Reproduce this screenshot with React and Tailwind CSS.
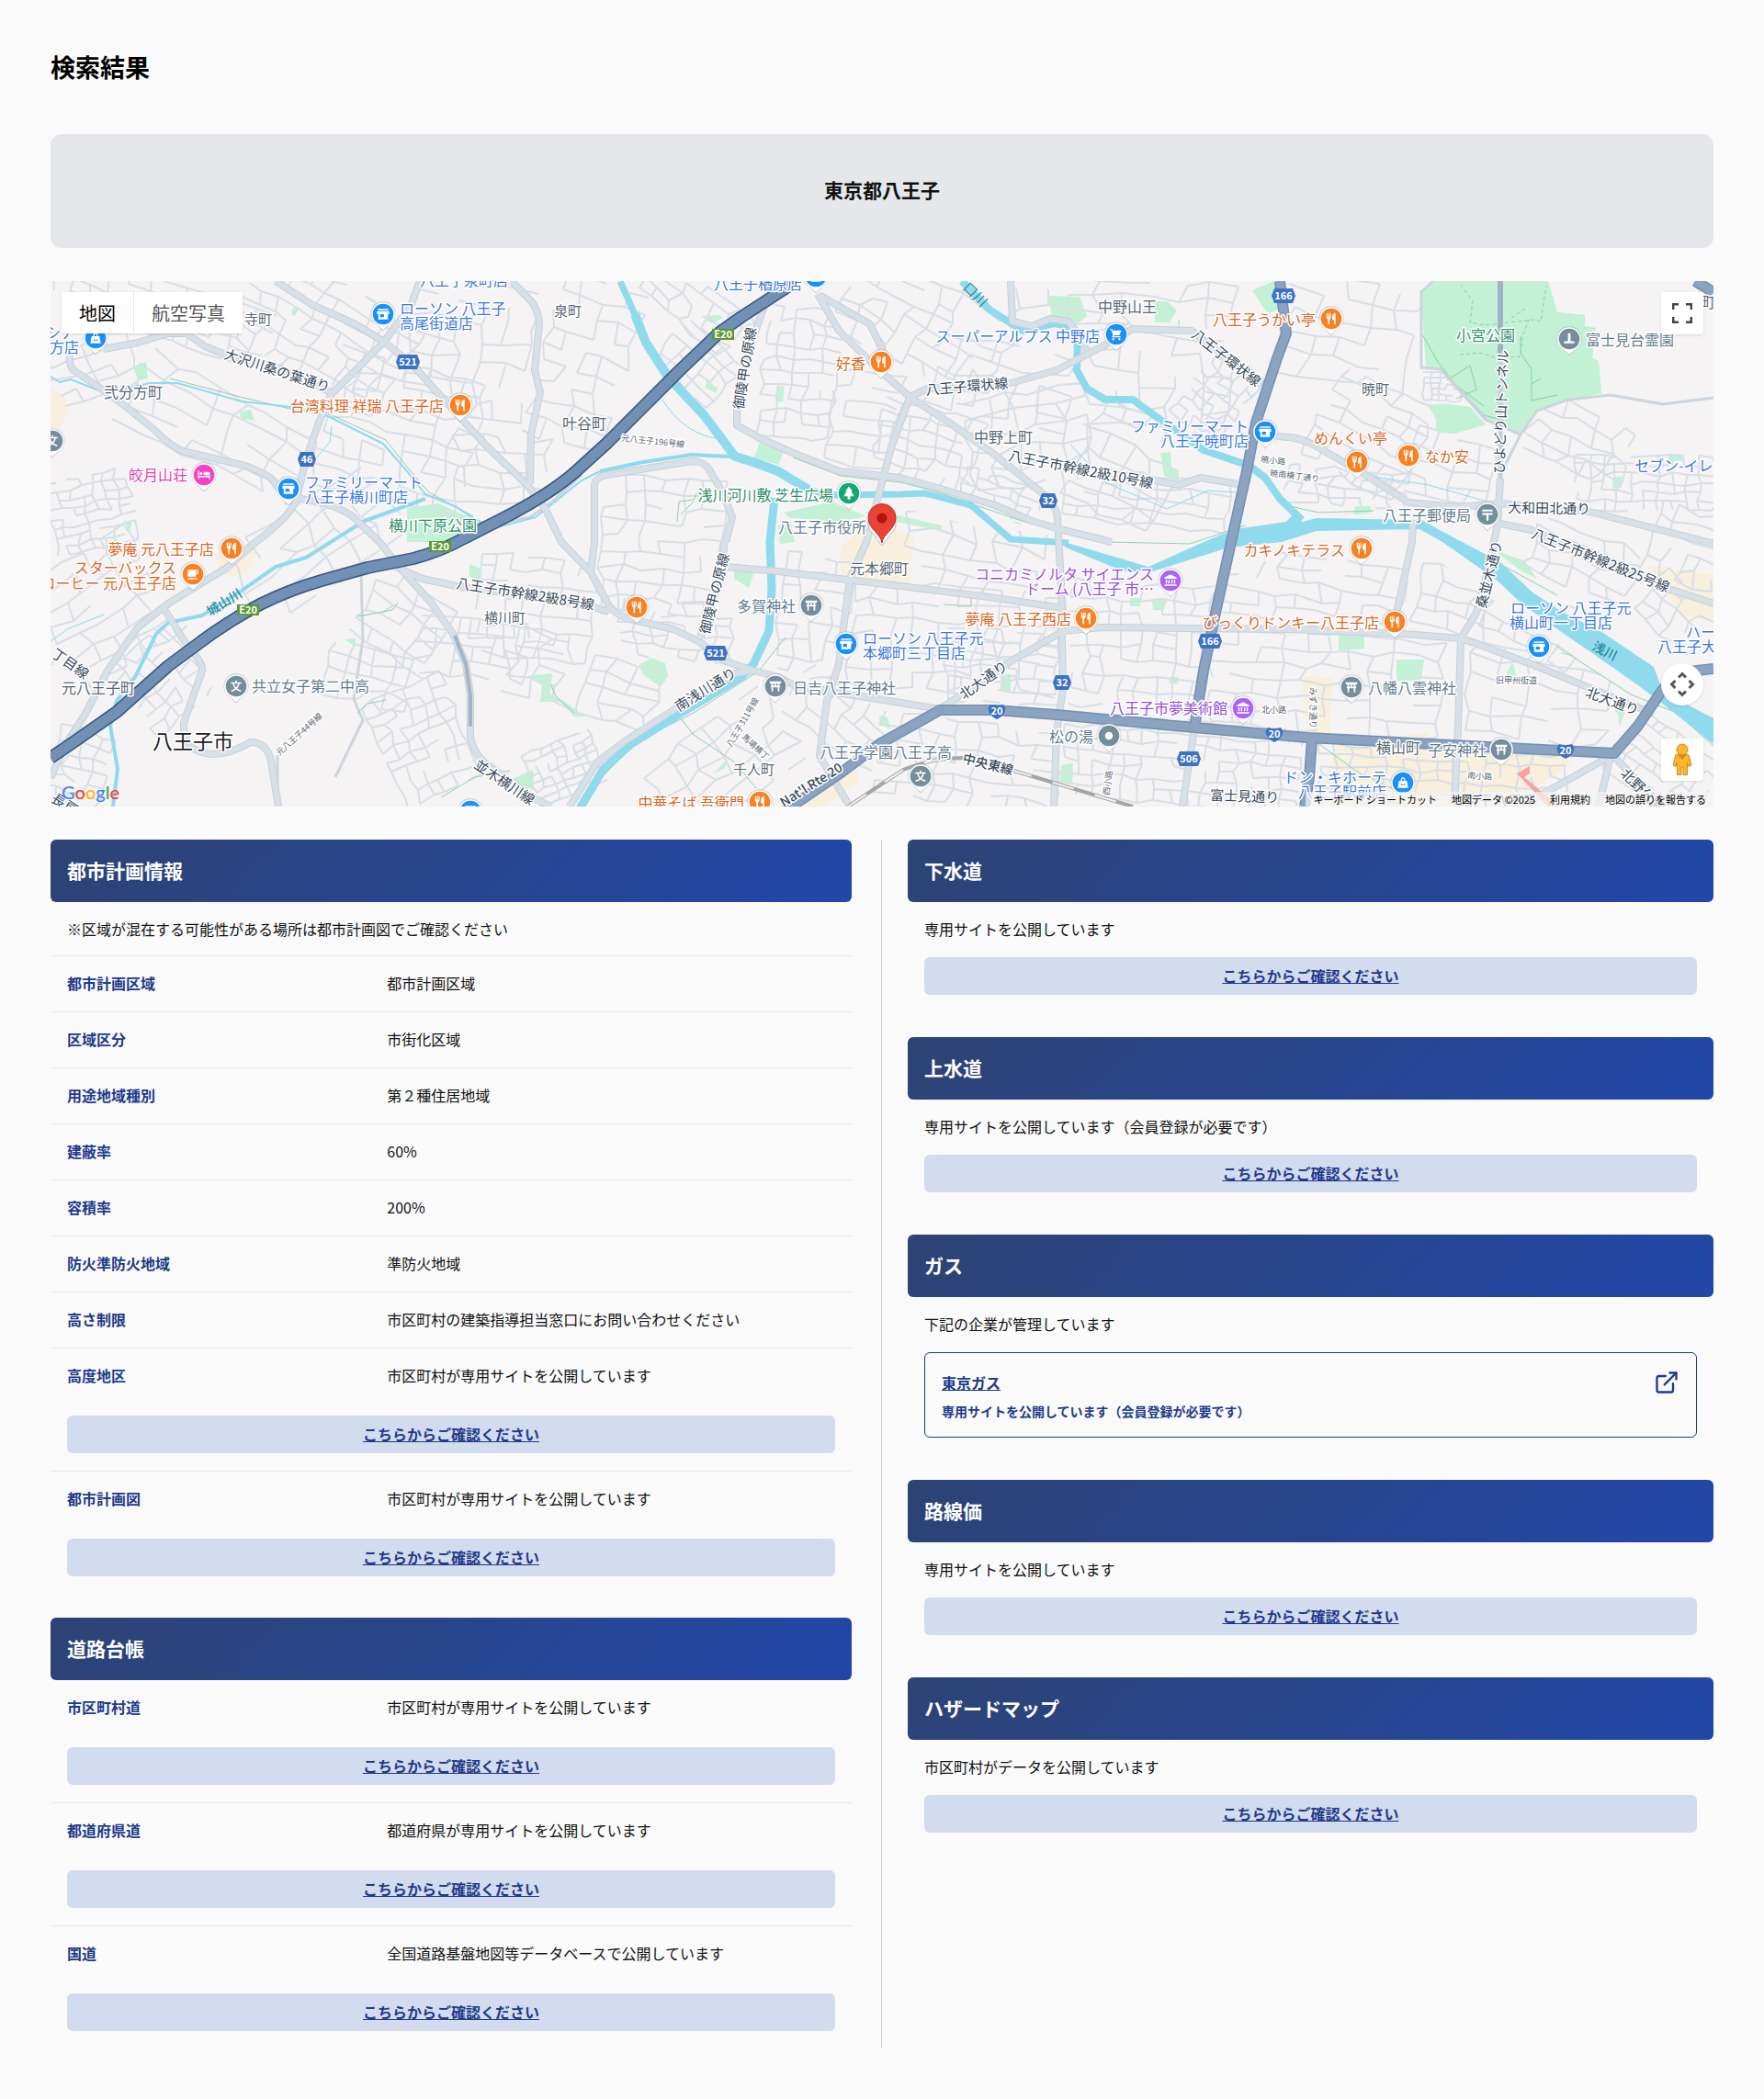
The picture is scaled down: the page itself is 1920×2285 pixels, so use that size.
import React from 'react';
import { ExternalLink } from 'lucide-react';

const LINK_TEXT = 'こちらからご確認ください';

const cityPlan = [
  { label: '都市計画区域', value: '都市計画区域' },
  { label: '区域区分', value: '市街化区域' },
  { label: '用途地域種別', value: '第２種住居地域' },
  { label: '建蔽率', value: '60%' },
  { label: '容積率', value: '200%' },
  { label: '防火準防火地域', value: '準防火地域' },
  { label: '高さ制限', value: '市区町村の建築指導担当窓口にお問い合わせください' },
  { label: '高度地区', value: '市区町村が専用サイトを公開しています', link: true },
  { label: '都市計画図', value: '市区町村が専用サイトを公開しています', link: true },
];

const roadLedger = [
  { label: '市区町村道', value: '市区町村が専用サイトを公開しています', link: true },
  { label: '都道府県道', value: '都道府県が専用サイトを公開しています', link: true },
  { label: '国道', value: '全国道路基盤地図等データベースで公開しています', link: true },
];

/* ---------- map data ---------- */

const motorway =
  'M0 519 L22 504 L72 469 L128 419 L155 399 Q190 372 228 352 Q260 336 295 326 L345 312 L395 302 Q425 294 450 280 L495 257 Q545 231 572 207 L605 177 L645 137 L685 97 L728 56 L752 39 L795 11 L812 0';

const trunkRoads = [
  'M1338 0 L1345 57 L1335 84 L1312 154 L1302 207 L1285 284 L1268 361 L1255 424 L1245 486',
  'M780 590 L862 534 L902 504 L968 467 L1028 467 L1095 472 L1245 486 L1368 497 L1545 506 L1702 514 L1728 484 L1753 447 Q1770 425 1792 424 L1810 422',
  'M1373 499 L1370 540 L1365 572',
  'M1790 0 L1810 12',
];

const mainRoads = [
  'M245 0 L285 26 L332 47 L363 66 L395 92 L428 129 L475 180 L518 221 L538 247 L556 284 L588 317 L608 354 Q618 366 635 369 L678 379 L705 392 L735 414 L765 424 L792 431 L812 441 L925 459 L968 466',
  'M402 0 L392 27 L363 66 L328 101 L305 124 L292 154 L278 194 L268 237 Q262 256 222 285 L192 312 L128 351 L95 377 L62 424 L38 471 L15 507 L0 541',
  'M20 71 Q20 95 25 97 L55 117 L75 131 L112 161 Q135 184 148 186 L212 201 Q240 212 242 217 L255 234 L295 241 Q325 250 335 262 L358 284 L382 314 L415 351 L438 384 L452 417 L457 451 L457 497 Q460 512 472 524 L528 564 L545 572',
  'M382 314 L405 324 L442 332 L500 340 L588 354 L608 360',
  'M58 74 L95 67 L128 57 L148 57 L168 71 L188 79 L250 95 L305 121',
  'M502 0 L525 24 Q532 36 532 47 L527 97 L533 121 L523 167 L522 221',
  'M835 14 L858 54 L902 97 L935 126 L978 154 L1025 187 L1075 227 Q1096 245 1096 258 L1100 330 L1102 444 L1095 491 L1092 572',
  'M838 16 L892 47 L905 74 L905 97',
  'M778 24 L765 61 L747 127 L747 157 L772 171 L808 187 L858 207 L925 214 L962 224 L1028 244 L1068 261 L1102 271 L1155 284',
  'M733 284 L732 314 L708 387',
  'M588 317 L592 284 L592 221 Q594 213 605 211 L698 196 Q712 196 718 207 L732 231 L742 257 L735 284',
  'M935 126 L955 117 L1045 111 L1095 97 L1145 71 L1178 52 L1242 54 L1318 112',
  'M1045 0 L1047 44 L1068 49 L1088 41 L1108 44 L1120 60 L1128 76',
  'M935 127 L915 181 L888 284 L870 324 L858 417 L845 457 L837 517 L870 572',
  'M735 311 L792 316 L925 332 L1022 344 L1102 356',
  'M1102 381 L1145 377 L1345 379 L1472 384 L1535 389 L1558 397 L1612 417 L1678 444 L1745 471',
  'M1102 381 L1045 414 L968 466',
  'M1535 389 L1532 484 L1528 572',
  'M1535 389 L1552 361 L1566 310 L1575 264 L1578 215',
  'M1483 261 L1482 284 L1465 361 L1465 384',
  'M1202 217 L1228 222 L1252 214 L1292 221',
  'M1320 167 L1355 171 Q1372 175 1390 187 L1425 207 L1478 241 L1532 246 L1578 242 L1675 251 L1810 286',
  'M1578 264 L1612 271 L1680 300 L1758 334 L1810 351',
  'M122 354 L145 391 Q168 418 165 424 L145 481 Q144 505 160 511 Q182 522 218 502 Q235 502 240 522 L248 572',
  'M565 572 L595 524 L625 501 L678 467 L745 427 L765 424',
  'M1698 517 L1632 554 L1600 572',
  'M1700 516 L1755 572',
  'M1245 486 L1232 572',
  'M1698 517 L1685 572',
];

const lesserRoads = [
  'M1600 167 L1618 141 L1652 129 L1698 124 L1755 134 L1810 127',
  'M445 265 L495 262 L522 257 L545 241 L578 211',
  'M1505 0 L1492 12 L1492 94 L1513 96 L1562 151 L1600 167 L1578 211',
  'M310 540 L340 478 L330 455 L340 390 L338 320',
  'M247 516 L247 572',
];

const rivers = [
  { w: 7, d: 'M620 0 L638 41' },
  { w: 10, d: 'M636 36 L648 67 L672 104 L712 147 L745 191 L765 197 L792 207 L825 227' },
  { w: 7, d: 'M820 226 L850 233 L925 232 L952 231 L1002 244 L1045 281 L1108 285' },
  { w: 9, d: 'M788 236 L783 284 L785 334 L782 381 L765 417 L752 431 L685 471 L632 504 L602 531 L576 574' },
  { w: 8, d: 'M992 0 L1022 31 L1058 54 L1092 46 L1108 49 Q1118 55 1118 64 L1117 97 L1128 117 L1148 129 L1178 129 L1208 151 L1255 184 L1305 201 L1322 214 L1338 237 L1362 260' },
  { w: 4, d: 'M742 191 L698 189 L645 197 L598 207' },
  { w: 2, d: 'M598 207 L578 217 L528 257 L482 269 L458 257 L442 246 L408 232 L388 207 L362 177 L302 147 L262 137 L208 131 L138 111 L108 111 L60 122 L22 107 L10 110 L0 104' },
  { w: 4, d: 'M408 237 L342 261 L305 284 L278 301 L245 311 L208 337 L165 364 L128 372 L115 384 L92 431 L72 457 L65 484 L73 531 L68 572' },
  { w: 1, d: 'M0 392 L20 378 L58 363 M306 158 L304 175 L290 192 M665 128 Q690 168 730 172 M1110 178 L1150 220 L1215 248 L1260 228 L1290 230 M1440 213 L1500 222 L1578 244 M0 418 L8 408' },
];

const riverArea =
  'M1100 283 L1168 303 L1195 311 L1262 281 L1290 270 L1345 262 L1356 250 L1345 243 L1362 262 L1378 258 L1492 260 L1525 278 L1578 306 L1612 338 L1645 360 L1690 383 L1745 420 L1755 447 L1810 476 L1810 504 L1752 458 L1728 440 L1678 405 L1630 372 L1600 350 L1575 326 L1515 284 L1490 270 L1378 272 L1340 284 L1282 290 L1200 316 L1168 316 L1105 290 Z';

const parks = [
  'M1492 11 L1505 0 L1630 0 L1640 34 L1670 37 L1670 49 L1682 51 L1678 84 L1685 87 L1688 122 L1652 129 L1618 141 L1600 167 L1562 151 L1528 114 L1513 96 L1497 94 Z',
  'M1499 134 L1520 134 L1545 137 L1562 156 L1528 166 L1508 164 L1508 150 Z',
  'M388 247 L422 242 L455 257 L462 274 L440 284 L388 284 Z',
  'M90 93 L104 88 L106 106 L95 108 Z',
  'M205 142 L218 140 L222 152 L208 150 Z',
  'M264 28 L270 30 L266 38 L262 36 Z',
  'M708 38 L728 37 L732 40 L720 46 Z',
  'M772 176 L798 186 L792 200 L766 192 Z',
  'M714 108 L726 116 L724 122 L713 116 Z',
  'M792 114 L799 115 L797 132 L790 131 Z',
  'M1086 16 L1120 17 L1128 38 L1118 46 L1090 38 Z',
  'M1202 22 L1215 22 L1226 32 L1218 45 L1202 45 Z',
  'M1308 10 L1332 0 L1338 30 L1325 36 Z',
  'M1208 187 L1219 186 L1220 202 L1228 206 L1228 218 L1212 212 Z',
  'M798 252 L850 240 L888 256 L860 262 L805 258 Z M792 266 L806 264 L810 284 L794 286 Z M918 254 L970 266 L970 272 L920 262 Z',
  'M640 418 L655 410 L669 416 L672 430 L664 442 L645 428 Z',
  'M518 430 L546 427 L544 450 L560 458 L582 474 L570 474 L555 458 L533 458 L535 440 Z',
  'M744 315 L766 317 L760 334 L744 324 Z',
  'M456 308 L470 314 L468 325 L456 322 Z',
  'M320 390 L332 389 L332 398 Z',
  'M1575 294 L1605 305 L1618 324 L1580 306 Z',
  'M1402 385 L1430 384 L1430 400 L1402 402 Z',
  'M1465 412 L1495 412 L1492 434 L1465 436 Z',
  'M1034 430 L1045 430 L1045 446 L1034 446 Z',
  'M1100 527 L1113 525 L1112 548 L1098 546 Z',
  'M1175 345 L1186 345 L1186 354 L1175 354 Z M1199 346 L1215 347 L1212 358 L1200 358 Z M1218 431 L1227 431 L1227 438 L1218 438 Z',
  'M902 473 L911 475 L914 488 L903 482 Z',
  'M1585 427 L1591 414 L1596 430 Z M1702 466 L1715 464 L1708 485 L1706 472 Z',
  'M1420 245 L1437 245 L1437 255 L1418 254 Z M1761 190 L1776 190 L1776 196 L1761 196 Z M1700 214 L1710 212 L1710 225 L1700 225 Z',
  'M500 543 L525 532 L526 554 L512 550 Z M722 536 L738 518 L734 530 Z M80 260 L88 263 L86 276 Z',
];

const commercial = [
  'M178 298 L222 284 L226 290 L214 318 L196 322 L184 312 Z',
  'M860 290 L895 258 L940 278 L935 330 L900 335 L860 322 Z',
  'M1362 430 L1395 432 L1392 500 L1368 500 Z',
  'M1400 500 L1500 508 L1660 512 L1650 530 L1600 560 L1540 572 L1380 572 Z',
  'M1740 310 L1810 320 L1810 370 L1775 364 Z',
  'M800 572 L850 540 L875 526 L880 545 L840 572 Z',
  'M0 118 L14 124 L20 138 L10 160 L0 160 Z',
  'M1475 494 L1500 492 L1500 508 L1475 506 Z',
];

const footpaths =
  'M450 278 L480 258 M302 144 L365 173 L391 206 L412 230 L460 256 M130 106 L210 127 L265 140 M682 262 L684 240 L700 238 L704 230 M700 240 L686 254 M808 192 L860 212 L925 219 L960 228 L1060 262 L1150 284 L1240 286 L1300 266 M1345 244 L1380 252 L1440 250 M1345 292 L1380 292 M1545 290 L1640 342 M1545 300 L1580 330 M1640 398 L1720 450 L1770 470 L1810 506 M800 388 L770 425 L700 470 L640 500 L600 540 L582 572 M686 476 L700 494 L745 524 L768 552 M1378 502 L1425 536 L1460 552 M335 365 L372 358 L378 350 M334 470 L345 460 L365 456 M425 562 L462 540 L500 533 M972 352 L1002 354 L1002 344 M570 470 L550 452 L545 440';

const parkPaths =
  'M1535 4 L1548 22 L1545 45 L1560 48 L1615 42 L1622 44 L1628 5 M1534 80 L1555 78 L1575 84 L1600 82 L1602 60 L1610 40 M1590 40 L1605 30';

const parkTrails =
  'M1493 58 L1510 88 L1530 114 L1560 146 L1582 152 M1520 108 L1545 92 L1552 118 L1530 128 M1600 60 L1600 78 L1612 96 L1612 130 L1640 124 M1612 112 L1622 106 M1525 110 L1560 136';

// [x, y, width, height, angle, step]
const streetAreas = [
  [0, 0, 240, 60, 18, 22],
  [0, 66, 90, 60, -18, 26],
  [80, 120, 200, 80, 28, 36],
  [200, 0, 190, 110, 30, 22],
  [300, 90, 160, 150, 14, 26],
  [390, 0, 130, 150, 8, 34],
  [535, 0, 90, 180, 16, 28],
  [440, 170, 100, 70, 4, 30],
  [0, 212, 90, 80, -12, 15],
  [200, 240, 180, 90, -34, 34],
  [0, 290, 120, 130, -32, 28],
  [78, 390, 80, 90, -42, 19],
  [0, 490, 60, 80, 16, 22],
  [300, 400, 90, 60, 14, 26],
  [340, 330, 90, 80, 32, 28],
  [360, 440, 90, 120, -24, 19],
  [400, 370, 120, 60, 6, 24],
  [460, 300, 130, 110, 6, 22],
  [600, 214, 130, 150, 4, 25],
  [640, 0, 120, 50, 40, 24],
  [665, 60, 80, 60, 42, 18],
  [775, 30, 80, 140, 6, 19],
  [850, 100, 70, 100, 8, 24],
  [860, 0, 180, 100, 30, 26],
  [960, 70, 150, 80, 12, 34],
  [900, 140, 110, 80, 14, 20],
  [1000, 120, 130, 100, -10, 34],
  [1120, 140, 100, 120, 24, 30],
  [1050, 0, 240, 50, 4, 36],
  [1130, 60, 150, 100, 4, 34],
  [1240, 80, 60, 90, 38, 17],
  [1100, 210, 180, 55, 6, 24],
  [990, 215, 90, 40, 20, 15],
  [1345, 0, 140, 110, 12, 32],
  [1380, 110, 110, 110, 28, 25],
  [1495, 100, 40, 30, 2, 9],
  [1480, 170, 90, 70, 14, 26],
  [1345, 205, 130, 40, 5, 20],
  [1610, 140, 110, 70, 26, 30],
  [1660, 190, 150, 60, 1, 16],
  [1740, 250, 80, 80, 18, 24],
  [1610, 275, 120, 60, 22, 30],
  [500, 400, 160, 70, 18, 34],
  [520, 500, 80, 60, -22, 13],
  [620, 350, 120, 60, 4, 20],
  [660, 480, 150, 90, -38, 32],
  [795, 300, 70, 130, 8, 28],
  [870, 335, 230, 110, 4, 27],
  [800, 445, 120, 60, 36, 24],
  [925, 262, 150, 80, 12, 30],
  [975, 380, 120, 80, 2, 22],
  [1110, 330, 150, 135, 3, 23],
  [1270, 300, 200, 75, 8, 25],
  [1262, 385, 250, 105, 4, 27],
  [900, 480, 190, 90, 8, 23],
  [1100, 480, 260, 90, 5, 18],
  [1380, 510, 270, 60, 3, 20],
  [1490, 300, 80, 80, 16, 23],
  [1545, 400, 150, 100, 8, 34],
  [1560, 340, 110, 60, 28, 28],
  [1700, 490, 110, 80, 38, 19],
  [1730, 330, 80, 60, 40, 25],
];

// small deterministic generator so the streets are the same on every render
const makeRandom = (seed) => {
  let s = seed * 7919 + 13;
  return () => {
    s = (s * 1103515245 + 12345) % 2147483648;
    return s / 2147483648;
  };
};

const streetPath = ([x, y, w, h, angle, step], seed) => {
  const rand = makeRandom(seed + 1);
  const cx = x + w / 2;
  const cy = y + h / 2;
  const rad = (angle * Math.PI) / 180;
  const cols = Math.round(w / step) + 1;
  const rows = Math.round(h / (step * 0.8)) + 1;
  const nodes = [];
  for (let r = 0; r <= rows; r++) {
    const row = [];
    for (let c = 0; c <= cols; c++) {
      const dx = (c / cols - 0.5) * w + (rand() - 0.5) * step * 0.4;
      const dy = (r / rows - 0.5) * h + (rand() - 0.5) * step * 0.3;
      row.push([
        Math.round(cx + dx * Math.cos(rad) - dy * Math.sin(rad)),
        Math.round(cy + dx * Math.sin(rad) + dy * Math.cos(rad)),
      ]);
    }
    nodes.push(row);
  }
  let d = '';
  for (let r = 0; r <= rows; r++) {
    for (let c = 0; c <= cols; c++) {
      const [px, py] = nodes[r][c];
      if (c < cols && rand() < 0.78) d += `M${px} ${py}L${nodes[r][c + 1][0]} ${nodes[r][c + 1][1]}`;
      if (r < rows && rand() < 0.66) d += `M${px} ${py}L${nodes[r + 1][c][0]} ${nodes[r + 1][c][1]}`;
    }
  }
  return d;
};

const streets = streetAreas.map(streetPath).join('');

const COLORS = {
  food: '#d9661f',
  shop: '#3b78e0',
  park: '#2f8f6b',
  civic: '#647d8c',
  museum: '#9250d8',
  hotel: '#e23bb4',
  water: '#1f8a9c',
  road: '#37475a',
  town: '#596673',
  city: '#1c2024',
};

// [text, x, baseline, colour, anchor, size, angle]
const labels = [
  ['八王子泉町店', 402, 5, 'shop'],
  ['ローソン 八王子', 380, 36, 'shop'],
  ['高尾街道店', 380, 52, 'shop'],
  ['シア', 27, 62, 'shop', 'end'],
  ['方店', 31, 78, 'shop', 'end'],
  ['寺町', 211, 47, 'town', 'start', 15],
  ['弐分方町', 58, 127, 'town'],
  ['台湾料理 祥瑞 八王子店', 428, 142, 'food', 'end'],
  ['皎月山荘', 149, 217, 'hotel', 'end'],
  ['ファミリーマート', 277, 225, 'shop'],
  ['八王子横川町店', 277, 241, 'shop'],
  ['横川下原公園', 368, 272, 'park'],
  ['夢庵 元八王子店', 178, 298, 'food', 'end'],
  ['スターバックス', 137, 318, 'food', 'end'],
  ['コーヒー 元八王子店', 137, 335, 'food', 'end'],
  ['元八王子町', 12, 449, 'town'],
  ['共立女子第二中高', 219, 447, 'civic'],
  ['八王子市', 111, 509, 'city', 'start', 22],
  ['泉町', 548, 38, 'town', 'start', 15],
  ['叶谷町', 557, 161, 'town'],
  ['八王子楢原店', 722, 9, 'shop'],
  ['好香', 887, 96, 'food', 'end'],
  ['浅川河川敷 芝生広場', 852, 239, 'park', 'end'],
  ['八王子市役所', 888, 274, 'civic', 'end'],
  ['スーパーアルプス 中野店', 1142, 66, 'shop', 'end'],
  ['中野山王', 1140, 34, 'town'],
  ['八王子うかい亭', 1377, 48, 'food', 'end'],
  ['中野上町', 1005, 176, 'town'],
  ['ファミリーマート', 1304, 164, 'shop', 'end'],
  ['八王子暁町店', 1304, 180, 'shop', 'end'],
  ['小宮公園', 1530, 65, 'park'],
  ['富士見台霊園', 1671, 70, 'civic'],
  ['町', 1796, 29, 'town'],
  ['暁町', 1427, 123, 'town', 'start', 15],
  ['めんくい亭', 1375, 177, 'food'],
  ['なか安', 1496, 197, 'food'],
  ['セブン-イレ', 1724, 207, 'shop'],
  ['八王子郵便局', 1546, 261, 'civic', 'end'],
  ['横川町', 472, 372, 'town', 'start', 15],
  ['多賀神社', 811, 360, 'civic', 'end'],
  ['ローソン 八王子元', 884, 395, 'shop'],
  ['本郷町三丁目店', 884, 411, 'shop'],
  ['日吉八王子神社', 808, 449, 'civic'],
  ['千人町', 743, 537, 'town', 'start', 15],
  ['八王子学園八王子高', 837, 519, 'civic'],
  ['中華そば 吾衛門', 755, 574, 'food', 'end'],
  ['元本郷町', 870, 319, 'town'],
  ['コニカミノルタ サイエンス', 1201, 325, 'museum', 'end'],
  ['ドーム (八王子 市⋯', 1201, 341, 'museum', 'end'],
  ['夢庵 八王子西店', 1111, 374, 'food', 'end'],
  ['八王子市夢美術館', 1281, 471, 'museum', 'end'],
  ['松の湯', 1135, 502, 'civic', 'end'],
  ['ドン・キホーテ', 1454, 546, 'shop', 'end'],
  ['八王子駅前店', 1454, 562, 'shop', 'end'],
  ['びっくりドンキー八王子店', 1446, 378, 'food', 'end'],
  ['カキノキテラス', 1409, 299, 'food', 'end'],
  ['ローソン 八王子元', 1589, 362, 'shop'],
  ['横山町一丁目店', 1588, 378, 'shop'],
  ['ハー', 1780, 388, 'shop'],
  ['八王子大', 1749, 404, 'shop'],
  ['八幡八雲神社', 1434, 449, 'civic'],
  ['横山町', 1443, 514, 'town'],
  ['子安神社', 1563, 517, 'civic', 'end'],
  ['大沢川桑の葉通り', 188, 84, 'road', 'start', 15, 18],
  ['城山川', 174, 365, 'water', 'start', 14, -32],
  ['丁目線', 0, 408, 'road', 'start', 15, 35],
  ['長房', 0, 566, 'road', 'start', 15, 32],
  ['元八王子44号線', 249, 517, 'town', 'start', 9, -42],
  ['並木横川線', 460, 529, 'road', 'start', 15, 34],
  ['元八王子196号線', 621, 174, 'town', 'start', 9, 6],
  ['御陵甲の原線', 754, 140, 'road', 'start', 15, -81],
  ['御陵甲の原線', 717, 385, 'road', 'start', 15, -76],
  ['口川', 992, 8, 'water', 'start', 15, 44],
  ['八王子環状線', 953, 124, 'road', 'start', 15, -5],
  ['八王子環状線', 1241, 60, 'road', 'start', 15, 38],
  ['八王子市幹線2級10号線', 1042, 195, 'road', 'start', 15, 11],
  ['暁小路', 1317, 197, 'town', 'start', 9, 6],
  ['暁南横丁通り', 1327, 212, 'town', 'start', 9, 7],
  ['ひよどり山トンネル', 1582, 210, 'road', 'start', 15, -88],
  ['大和田北通り', 1586, 252, 'road', 'start', 15, 1],
  ['八王子市幹線2級25号線', 1611, 279, 'road', 'start', 15, 22],
  ['八王子市幹線2級8号線', 441, 334, 'road', 'start', 15, 9],
  ['南浅川通り', 684, 469, 'road', 'start', 15, -32],
  ['八王子311号線', 741, 508, 'town', 'start', 9, -60],
  ['馬場横丁', 752, 497, 'town', 'start', 9, 43],
  ["Nat'l Rte 20", 798, 573, 'road', 'start', 14, -32],
  ['北大通り', 994, 456, 'road', 'start', 15, -35],
  ['北小路', 1318, 470, 'town', 'start', 9],
  ['中央東線', 992, 524, 'road', 'start', 14, 14],
  ['西小路', 1152, 560, 'town', 'start', 9, -82],
  ['富士見通り', 1262, 565, 'road', 'start', 15, 2],
  ['桑並木通り', 1562, 357, 'road', 'start', 15, -76],
  ['浅川', 1677, 401, 'water', 'start', 14, 26],
  ['旧甲州街道', 1573, 438, 'town', 'start', 9],
  ['北大通り', 1670, 452, 'road', 'start', 15, 20],
  ['みずき通り', 1371, 442, 'town', 'start', 9, 90],
  ['南小路', 1542, 541, 'town', 'start', 9, 4],
  ['北野公園', 1708, 537, 'road', 'start', 15, 45],
  ['京王八王子', 1538, 572, 'civic'],
];

// [kind, x, y]
const pins = [
  ['shop', 362, 36], ['bag', 49, 62], ['food', 446, 135], ['school', 2, 174],
  ['hotel', 167, 211], ['shop', 259, 226], ['food', 197, 291], ['cafe', 155, 319],
  ['school', 202, 441], ['shop', 457, 577], ['shop', 833, -5], ['food', 904, 88],
  ['tree', 869, 231], ['cart', 1160, 58], ['shop', 1322, 164], ['food', 1394, 41],
  ['grave', 1653, 63], ['food', 1422, 197], ['food', 1478, 190], ['post', 1564, 254],
  ['food', 638, 355], ['shrine', 828, 353], ['shop', 866, 395], ['shrine', 789, 441],
  ['food', 772, 567], ['museum', 1219, 326], ['food', 1127, 367], ['dot', 1152, 495],
  ['school', 947, 539], ['museum', 1298, 465], ['food', 1427, 291], ['food', 1463, 371],
  ['shop', 1620, 398], ['shrine', 1416, 442], ['shrine', 1579, 510], ['bag', 1472, 546],
];

const pinColors = {
  shop: '#1a90fc', bag: '#1a90fc', cart: '#1a90fc', food: '#fb8022', cafe: '#fb8022',
  hotel: '#f541c6', tree: '#17a673', museum: '#ac62f7', school: '#748e9b',
  grave: '#748e9b', post: '#748e9b', shrine: '#748e9b', dot: '#748e9b',
};

const glyphs = {
  shop: <path d="M-6 -6H6V-4.500H-6ZM-7 -3.500H7V0H5.500V6H-5.500V0H-7ZM-3.500 0V3.500H1V0Z" fillRule="evenodd" />,
  bag: <path d="M-4.500 -2H-2.500V-3A2.500 3 0 0 1 2.500 -3V-2H4.500L6 6H-6ZM-1.300 -2H1.300V-3A1.300 1.800 0 0 0 -1.300 -3ZM-2.500 1A2.500 2.500 0 0 0 2.500 1H1.500A1.500 1.500 0 0 1 -1.500 1Z" fillRule="evenodd" />,
  cart: <path d="M-7 -6H-4.500L-4 -4.500H6L3.500 1H-2.500L-3 2.200H5V3.500H-5L-3.800 0.500L-5.500 -4.700H-7ZM-3.500 4.300A1.200 1.200 0 1 1 -3.500 6.800A1.200 1.200 0 1 1 -3.500 4.300ZM3.500 4.300A1.200 1.200 0 1 1 3.500 6.800A1.200 1.200 0 1 1 3.500 4.300Z" />,
  food: <path d="M-5.500 -6.500H-4.300V-2.500H-3.500V-6.500H-2.300V-2.500H-1.500V-6.500H-0.300V-2Q-0.500 0 -2 0.500V6.500H-3.800V0.500Q-5.300 0 -5.500 -2ZM1.200 -2Q1.500 -6 5 -6.500V6.500H3.300V1.500H1.200Z" />,
  cafe: <path d="M-6 -5H6V0H3.500V1.500Q3.300 3 2 3H-4.500Q-6 3 -6 1.500ZM3.500 -3.700V-1.300H4.700V-3.700ZM-6 4.500H5V6H-6Z" fillRule="evenodd" />,
  hotel: <path d="M-7 -5H-5.700V1H7V5H5.700V2.500H-5.700V5H-7ZM-3.300 -3.300A1.600 1.600 0 1 1 -3.300 -0.100A1.600 1.600 0 1 1 -3.300 -3.300ZM-0.500 -3.500H5.500Q7 -3.300 7 -1.500V0.200H-0.500Z" />,
  tree: <path d="M0 -8L4 -2.500H2.500L6 3.500H1.500V7H-1.500V3.500H-6L-2.500 -2.500H-4Z" />,
  museum: <path d="M0 -7L7 -3.500V-2H-7V-3.500ZM-5.500 -1H-4V3.500H-5.500ZM-2.500 -1H-1V3.500H-2.500ZM1 -1H2.500V3.500H1ZM4 -1H5.500V3.500H4ZM-7 4.500H7V6H-7Z" />,
  school: <path d="M-6 -4.500H-0.800V-6.500H0.800V-4.500H6V-3H4Q3.200 0.500 1.400 2.500Q3 4 6 4.800L5.200 6.300Q2 5.500 0 3.700Q-2 5.500 -5.200 6.300L-6 4.800Q-3 4 -1.400 2.500Q-3.200 0.500 -4 -3H-6ZM-2.300 -3Q-1.500 0 0 1.500Q1.500 0 2.300 -3Z" fillRule="evenodd" />,
  grave: <path d="M-1.500 -6.500H1.500V2.500H6V5H-6V2.500H-1.500Z" />,
  post: <path d="M-6 -5.500H6V-3.500H-6ZM-6 -1.500H6V0.500H1.200V7H-1.200V0.500H-6Z" />,
  shrine: <path d="M-7 -5.500H7L6 -3H4.500V-0.500H5.500V1.200H4.500V6H2.700V1.200H-2.700V6H-4.500V1.200H-5.500V-0.500H-4.500V-3H-6ZM-2.700 -3V-0.500H-0.800V-3ZM0.800 -3V-0.500H2.700V-3Z" fillRule="evenodd" />,
  dot: <circle r="4.500" />,
};

// [number, x, y, kind]
const shields = [
  ['521', 389, 88, 'pref'], ['46', 279, 194, 'pref'], ['521', 724, 405, 'pref'],
  ['32', 1086, 239, 'pref'], ['166', 1342, 16, 'pref'], ['166', 1262, 392, 'pref'],
  ['32', 1101, 437, 'pref'], ['506', 1239, 520, 'pref'], ['20', 1030, 468, 'national'],
  ['20', 1332, 493, 'national'], ['20', 1649, 511, 'national'], ['E20', 732, 58, 'express'],
  ['E20', 424, 289, 'express'], ['E20', 215, 358, 'express'],
];

const Pin = ({ kind, x, y }) => (
  <g transform={`translate(${x} ${y})`}>
    <path d="M0 18.500L-8 10.500A13.500 13.500 0 1 1 8 10.500Z" fill="#9aa5ad" opacity="0.5" />
    <path d="M0 17L-8 10A12.800 12.800 0 1 1 8 10Z" fill="#fff" />
    <circle r="11.300" fill={pinColors[kind]} />
    <g fill="#fff" transform="scale(0.95)">{glyphs[kind]}</g>
  </g>
);

const Shield = ({ number, x, y, kind }) => {
  const half = number.length > 2 ? 13 : 10;
  return (
    <g transform={`translate(${x} ${y})`}>
      {kind === 'express' && <rect x="-12" y="-6" width="24" height="12" fill="#5f9836" />}
      {kind === 'national' && (
        <path d="M-7 -7Q0 -5 7 -7L9.500 -3Q9 5 0 9Q-9 5 -9.500 -3Z" fill="#3c72c4" />
      )}
      {kind === 'pref' && (
        <path d={`M${-half + 3} -8H${half - 3}L${half} 0L${half - 3} 8H${-half + 3}L${-half} 0Z`} fill="#3c72c4" />
      )}
      <text y="4" textAnchor="middle" fill="#fff" className="text-[11px] font-bold">
        {number}
      </text>
    </g>
  );
};

const labelSizes = {
  9: 'text-[9px]',
  14: 'text-[14px] font-medium',
  15: 'text-[15px]',
  16: 'text-[16px]',
  22: 'text-[22px]',
};

const MapDrawing = () => (
  <svg
    viewBox="0 0 1810 572"
    preserveAspectRatio="xMidYMid slice"
    className="block h-full w-full"
    role="img"
    aria-label="東京都八王子市の地図"
  >
    <rect width="1810" height="572" fill="#f5f3f4" />
    <g fill="#f8efdc">{commercial.map((d) => <path key={d} d={d} />)}</g>
    <g fill="#c3f1d5">{parks.map((d) => <path key={d} d={d} />)}</g>
    <path d={streets} fill="none" stroke="#d9dfe6" strokeWidth="2" />
    {/* 公園と河川敷の上には細い道路を描かない */}
    <path d={parks[0]} fill="#c3f1d5" />
    <path d={parks[1]} fill="#c3f1d5" />
    <path d="M1105 275 L1190 305 L1270 275 L1480 246 L1560 285 L1640 345 L1760 430 L1810 470 L1810 520 L1740 465 L1640 395 L1560 340 L1490 290 L1380 284 L1200 326 L1160 324 L1105 300Z" fill="#f5f3f4" />
    <path d="M925 222 L1010 236 L1060 270 L1040 276 L925 246Z" fill="#f5f3f4" />
    <path d={parkTrails} fill="none" stroke="#86cfa9" strokeWidth="1" />
    <path d={parkPaths} fill="none" stroke="#86cfa9" strokeWidth="1" strokeDasharray="4 3" />
    <g fill="none" stroke="#ccd4de" strokeWidth="3">{lesserRoads.map((d) => <path key={d} d={d} />)}</g>
    <path d={footpaths} fill="none" stroke="#8fcfb0" strokeWidth="1" />
    <path d={riverArea} fill="#90daee" />
    <g fill="none" stroke="#90daee" strokeLinejoin="round">
      {rivers.map((river) => <path key={river.d} d={river.d} strokeWidth={river.w} />)}
    </g>
    <g fill="none" stroke="#c6d0da" strokeWidth="8" strokeLinejoin="round">{mainRoads.map((d) => <path key={d} d={d} />)}</g>
    <g fill="none" stroke="#d8e0e7" strokeWidth="6" strokeLinejoin="round">{mainRoads.map((d) => <path key={d} d={d} />)}</g>
    <path d="M868 572 L895 554 L928 532 Q960 519 992 519 L1045 532 L1178 572" fill="none" stroke="#a5a5a5" strokeWidth="4" />
    <path d="M868 572 L895 554 L928 532 Q960 519 992 519 L1045 532 L1178 572" fill="none" stroke="#f1f1f1" strokeWidth="2" strokeDasharray="24 24" />
    <path d="M1596 536 L1610 528 L1610 536 L1604 540 L1642 572 L1630 572 Z" fill="#f5a3a3" />
    <path d="M1578 78 V215" stroke="#c3d0de" strokeWidth="5" />
    <path d="M1578 0 V78" stroke="#9fb2c8" strokeWidth="6" />
    <path d="M440 386 L452 417 L457 451 L457 485" fill="none" stroke="#a3b4c7" strokeWidth="4" />
    <g fill="none" stroke="#7490b3" strokeWidth="12" strokeLinejoin="round">{trunkRoads.map((d) => <path key={d} d={d} />)}</g>
    <g fill="none" stroke="#8aa3c1" strokeWidth="9" strokeLinejoin="round">{trunkRoads.map((d) => <path key={d} d={d} />)}</g>
    <path d={motorway} fill="none" stroke="#35567f" strokeWidth="14" strokeLinejoin="round" />
    <path d={motorway} fill="none" stroke="#7090b5" strokeWidth="11" strokeLinejoin="round" />
    {shields.map(([number, x, y, kind]) => (
      <Shield key={`${x}-${y}`} number={number} x={x} y={y} kind={kind} />
    ))}
    {labels.map(([text, x, y, color, anchor = 'start', size = 16, angle = 0]) => (
      <text
        key={`${text}-${x}`}
        x={x}
        y={y}
        textAnchor={anchor}
        fill={COLORS[color]}
        stroke="#fff"
        strokeWidth={color === 'water' ? 0 : 3}
        strokeLinejoin="round"
        paintOrder="stroke"
        transform={angle ? `rotate(${angle} ${x} ${y})` : undefined}
        className={labelSizes[size]}
      >
        {text}
      </text>
    ))}
    {pins.map(([kind, x, y]) => <Pin key={`${x}-${y}`} kind={kind} x={x} y={y} />)}
    <path d="M905 288L896 276A15 15 0 1 1 914 276Z" fill="#fff" stroke="#b5bcc2" strokeWidth="1" />
    <path d="M905 285C904 275 890 270 890 257.500A15 15 0 0 1 920 257.500C920 270 906 275 905 285Z" fill="#ea4335" stroke="#c5221f" strokeWidth="1" />
    <circle cx="905" cy="258" r="5.500" fill="#b31412" />
  </svg>
);

const MapPanel = () => (
  <div className="relative mt-9 h-[572px] overflow-hidden bg-[#f5f3f4] font-['Noto_Sans_CJK_JP',sans-serif]">
    <MapDrawing />

    <div className="absolute top-3 left-3 flex h-[45px] bg-white text-xl shadow-sm">
      <button type="button" className="border-r border-gray-200 px-[19px] text-black">地図</button>
      <button type="button" className="px-[19px] text-[#565656]">航空写真</button>
    </div>

    <button type="button" aria-label="全画面表示" className="absolute top-3 right-[11px] flex size-[46px] items-center justify-center rounded-xs bg-white shadow-sm">
      <svg viewBox="0 0 22 22" className="size-[22px]" fill="none" stroke="#444" strokeWidth="2.400">
        <path d="M1.200 7V1.200H7M15 1.200H20.800V7M20.800 15V20.800H15M7 20.800H1.200V15" />
      </svg>
    </button>

    <div className="absolute right-[11px] bottom-7 flex flex-col gap-9">
      <button type="button" aria-label="地図のカメラ コントロール" className="flex size-[46px] items-center justify-center rounded-full bg-white shadow-sm">
        <svg viewBox="0 0 28 28" className="size-7" fill="none" stroke="#555" strokeWidth="3">
          <path d="M10 6.500L14 2.500L18 6.500M10 21.500L14 25.500L18 21.500M6.500 10L2.500 14L6.500 18M21.500 10L25.500 14L21.500 18" />
        </svg>
      </button>
      <button type="button" aria-label="ストリートビューを開く" className="flex size-[46px] items-center justify-center rounded-xs bg-white shadow-sm">
        <svg viewBox="0 0 22 36" className="h-9 w-[22px]" stroke="#d18a1c" strokeWidth="1">
          <path d="M6 12H16Q18 12 18.500 14L21 24L18 25.500L16.500 21V34.500H12V26H10V34.500H5.500V21L4 25.500L1 24L3.500 14Q4 12 6 12Z" fill="#fbb62d" />
          <path d="M6 12H16L11 18Z" fill="#e8772e" stroke="none" />
          <circle cx="11" cy="7" r="6" fill="#fbb62d" />
        </svg>
      </button>
    </div>

    <a href="#google" aria-label="Google" className="absolute bottom-0 left-3 font-['Lato',sans-serif] text-xl leading-8 font-medium text-[#4285f4]">
      G<span className="text-[#ea4335]">o</span><span className="text-[#fbbc05]">o</span>g<span className="text-[#34a853]">l</span><span className="text-[#ea4335]">e</span>
    </a>

    <div className="absolute right-0 bottom-0 flex h-4 items-center gap-4 bg-[#f5f5f5]/70 px-2 text-[11px] text-black">
      <button type="button">キーボード ショートカット</button>
      <span>地図データ ©2025</span>
      <a href="#terms">利用規約</a>
      <a href="#report">地図の誤りを報告する</a>
    </div>
  </div>
);

/* ---------- result sections ---------- */

const Section = ({ title, children }) => (
  <section>
    <h2 className="rounded-md bg-[linear-gradient(135deg,#2d4373,#2147a9)] px-[18px] pt-[19px] pb-[21px] text-[21px] leading-7 font-bold text-white">
      {title}
    </h2>
    {children}
  </section>
);

const SiteLink = () => (
  <a href="#site" className="block rounded-md bg-[#d3dbee] text-center leading-[41px] font-bold text-[#1e3a8a] underline">
    {LINK_TEXT}
  </a>
);

const InfoRows = ({ rows }) => (
  <dl className="divide-y divide-gray-200">
    {rows.map((row) => (
      <div key={row.label} className="grid grid-cols-12 px-[18px] pt-[17px] pb-[19px]">
        <dt className="col-span-5 font-bold text-[#1e3a8a]">{row.label}</dt>
        <dd className="col-span-7">{row.value}</dd>
        {row.link && (
          <dd className="col-span-12 mt-8">
            <SiteLink />
          </dd>
        )}
      </div>
    ))}
  </dl>
);

const LinkSection = ({ title, text }) => (
  <Section title={title}>
    <div className="flex flex-col gap-[19px] px-[18px] pt-[17px] pb-[18px]">
      <p>{text}</p>
      <SiteLink />
    </div>
  </Section>
);

const App = () => {
  return (
    <main className="min-h-screen bg-[#fafafa] p-[55px] font-['Noto_Sans_CJK_JP',sans-serif] text-base leading-6 text-[#111]">
      <h1 className="text-[27px] leading-9 font-bold text-black">検索結果</h1>

      <div className="mt-[55px] rounded-xl bg-gray-200 pt-[46px] pb-[50px] text-center">
        <p className="text-[21px] leading-7 font-bold">東京都八王子</p>
      </div>

      <MapPanel />

      <div className="mt-9 grid grid-cols-2">
        <div className="flex flex-col gap-[26px] border-r border-gray-300 pr-8">
          <Section title="都市計画情報">
            <p className="border-b border-gray-200 px-[18px] py-[17px]">
              ※区域が混在する可能性がある場所は都市計画図でご確認ください
            </p>
            <InfoRows rows={cityPlan} />
          </Section>
          <Section title="道路台帳">
            <InfoRows rows={roadLedger} />
          </Section>
        </div>

        <div className="flex flex-col gap-7 pl-7">
          <LinkSection title="下水道" text="専用サイトを公開しています" />
          <LinkSection title="上水道" text="専用サイトを公開しています（会員登録が必要です）" />
          <Section title="ガス">
            <div className="flex flex-col gap-[19px] px-[18px] pt-[17px] pb-[18px]">
              <p>下記の企業が管理しています</p>
              <div className="rounded-md border border-[#1e3a8a] p-[18px] font-bold text-[#1e3a8a]">
                <div className="flex h-7 items-center justify-between">
                  <a href="#gas" className="underline">東京ガス</a>
                  <ExternalLink className="size-7" />
                </div>
                <p className="mt-[7px] text-sm leading-5">専用サイトを公開しています（会員登録が必要です）</p>
              </div>
            </div>
          </Section>
          <LinkSection title="路線価" text="専用サイトを公開しています" />
          <LinkSection title="ハザードマップ" text="市区町村がデータを公開しています" />
        </div>
      </div>
    </main>
  );
};

export default App;
